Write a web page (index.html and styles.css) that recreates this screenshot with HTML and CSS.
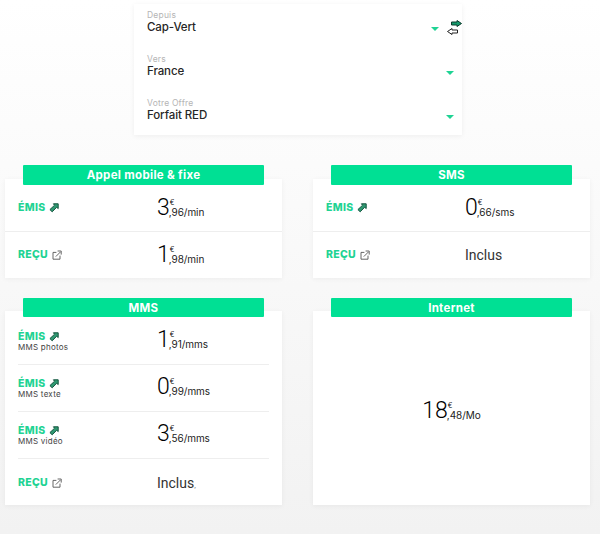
FILE: index.html
```html
<!DOCTYPE html>
<html lang="fr">
<head>
<meta charset="utf-8">
<title>Tarifs</title>
<link rel="stylesheet" href="styles.css">
</head>
<body>
<svg class="defs" width="0" height="0" aria-hidden="true">
  <symbol id="out" viewBox="0 0 10 10"><path d="M4.4.8H9.2V5.6L7.7 4.2 3.2 8.8.9 6.6 5.6 2.2Z" fill="#2f9a72" stroke="#14543f" stroke-width="1" stroke-linejoin="round"/></symbol>
  <symbol id="in" viewBox="0 0 10 10"><path d="M8 5.6V9.2H1V2.4H4.4M3.8 6.6 8.4 2M5.6 1H9.2V4.6" fill="none" stroke="#555" stroke-width=".9"/></symbol>
</svg>
<main class="page">
  <section class="picker">
    <div class="swap">
      <svg class="swap-a" width="11" height="7" viewBox="0 0 11 7"><path d="M.5 2H6V.5L10.5 3.5 6 6.5V5H.5Z" fill="#159a6c" stroke="#0d3a2c"/></svg>
      <svg class="swap-b" width="11" height="7" viewBox="0 0 11 7"><path d="M10.5 2H5V.5L.5 3.5 5 6.5V5H10.5Z" fill="#fff" stroke="#222"/></svg>
    </div>
    <div class="field">
      <div class="field-text"><span class="field-label">Depuis</span><span class="field-value">Cap-Vert</span></div>
      <i class="caret caret-first"></i>
    </div>
    <div class="field">
      <div class="field-text"><span class="field-label">Vers</span><span class="field-value">France</span></div>
      <i class="caret"></i>
    </div>
    <div class="field">
      <div class="field-text"><span class="field-label">Votre Offre</span><span class="field-value">Forfait RED</span></div>
      <i class="caret"></i>
    </div>
  </section>

  <section class="grid">
    <article class="card">
      <h2 class="card-title">Appel mobile &amp; fixe</h2>
      <div class="rows rows-full">
        <div class="row"><div class="who"><span class="dir">ÉMIS <svg class="ico"><use href="#out"/></svg></span></div><div class="price"><b>3</b><span class="frac"><sup>€</sup><span>,96/min</span></span></div></div>
        <div class="row"><div class="who"><span class="dir">REÇU <svg class="ico"><use href="#in"/></svg></span></div><div class="price"><b>1</b><span class="frac"><sup>€</sup><span>,98/min</span></span></div></div>
      </div>
    </article>
    <article class="card">
      <h2 class="card-title">SMS</h2>
      <div class="rows rows-full">
        <div class="row"><div class="who"><span class="dir">ÉMIS <svg class="ico"><use href="#out"/></svg></span></div><div class="price"><b>0</b><span class="frac"><sup>€</sup><span>,66/sms</span></span></div></div>
        <div class="row"><div class="who"><span class="dir">REÇU <svg class="ico"><use href="#in"/></svg></span></div><div class="incl">Inclus</div></div>
      </div>
    </article>
    <article class="card">
      <h2 class="card-title">MMS</h2>
      <div class="rows rows-inset">
        <div class="row"><div class="who"><span class="dir">ÉMIS <svg class="ico"><use href="#out"/></svg></span><small>MMS photos</small></div><div class="price"><b>1</b><span class="frac"><sup>€</sup><span>,91/mms</span></span></div></div>
        <div class="row"><div class="who"><span class="dir">ÉMIS <svg class="ico"><use href="#out"/></svg></span><small>MMS texte</small></div><div class="price"><b>0</b><span class="frac"><sup>€</sup><span>,99/mms</span></span></div></div>
        <div class="row"><div class="who"><span class="dir">ÉMIS <svg class="ico"><use href="#out"/></svg></span><small>MMS vidéo</small></div><div class="price"><b>3</b><span class="frac"><sup>€</sup><span>,56/mms</span></span></div></div>
        <div class="row"><div class="who"><span class="dir">REÇU <svg class="ico"><use href="#in"/></svg></span></div><div class="incl">Inclus<em>,</em></div></div>
      </div>
    </article>
    <article class="card card-center">
      <h2 class="card-title">Internet</h2>
      <div class="price"><b>18</b><span class="frac"><sup>€</sup><span>,48/Mo</span></span></div>
    </article>
  </section>
</main>
</body>
</html>
```
FILE: styles.css
```css
* { box-sizing: border-box; }
html, body { margin: 0; height: 534px; overflow: hidden; }
body {
  background: linear-gradient(#ffffff 0, #f2f2f2 100%);
  font-family: Inter, "Noto Sans", sans-serif;
  color: #222;
}
.defs { position: absolute; }
.page { padding-top: 4px; }

.picker {
  position: relative;
  width: 328px;
  height: 131px;
  margin-left: 134px;
  padding-top: 4px;
  background: #fff;
  box-shadow: 0 1px 5px rgba(0,0,0,.06);
}
.field {
  display: flex;
  align-items: flex-end;
  justify-content: space-between;
  height: 44px;
  padding: 0 8px 0 13px;
}
.field-text { display: flex; flex-direction: column; }
.field-label { font-size: 8.5px; line-height: 10px; color: #b5b5b5; letter-spacing: .2px; }
.field-value { font-size: 11.5px; line-height: 14px; font-weight: 500; color: #262626; letter-spacing: -.1px; margin-bottom: 18px; }
.caret {
  width: 0; height: 0;
  margin-bottom: 21px;
  border-left: 4px solid transparent;
  border-right: 4px solid transparent;
  border-top: 4px solid #1fd394;
}
.caret-first { margin-right: 15px; }
.swap { position: absolute; top: 16px; left: 313px; width: 15px; height: 15px; }
.swap-a { position: absolute; left: 4px; top: 0; }
.swap-b { position: absolute; left: 0; top: 8px; }

.grid {
  display: grid;
  grid-template-columns: 277px 277px;
  grid-template-rows: 99.5px 194px;
  column-gap: 31px;
  row-gap: 33px;
  margin: 43.5px 0 0 5px;
}
.card {
  position: relative;
  background: #fff;
  box-shadow: 0 1px 5px rgba(0,0,0,.05);
}
.card-title {
  position: absolute;
  top: -13.5px; left: 18px;
  width: 241px; height: 19.5px;
  margin: 0;
  background: #00e094;
  border-radius: 1px;
  color: #fff;
  font-size: 11.5px;
  font-weight: 700;
  line-height: 20px;
  letter-spacing: .3px;
  text-align: center;
}
.rows { display: flex; flex-direction: column; }
.rows-full { padding-top: 6px; }
.rows-inset { padding: 7px 13px 0; }
.row {
  display: flex;
  align-items: center;
  height: 47px;
  border-bottom: 1px solid #eeeeee;
}
.rows-full .row { padding-left: 13px; }
.rows-full .row:last-child, .rows-inset .row:last-child { border-bottom: 0; }
.who { width: 139px; display: flex; flex-direction: column; }
.dir {
  color: #1fd394;
  font-size: 10.5px;
  font-weight: 800;
  line-height: 12px;
  letter-spacing: .3px;
  display: flex;
  align-items: center;
  gap: 4px;
}
.ico { width: 10px; height: 10px; }
small { font-size: 8px; line-height: 9px; color: #444; letter-spacing: .25px; }

.price { display: flex; align-items: flex-end; color: #000; }
.rows-inset .price { margin-bottom: 2px; }
.price b {
  font-family: Roboto, sans-serif;
  font-weight: 300;
  font-size: 23px;
  line-height: 26px;
}
.frac { display: flex; flex-direction: column; margin-left: -1px; padding-bottom: 3px; }
.frac sup { font-size: 7px; line-height: 8px; vertical-align: baseline; margin-left: 1px; }
.frac span { font-size: 10px; line-height: 11px; letter-spacing: -.05px; color: #222; }
.incl { font-family: Roboto, sans-serif; font-size: 14px; color: #333; }
.incl em { font-style: normal; font-size: 8px; color: #777; }
.card-center { display: flex; align-items: center; justify-content: center; padding-top: 6px; }
```
